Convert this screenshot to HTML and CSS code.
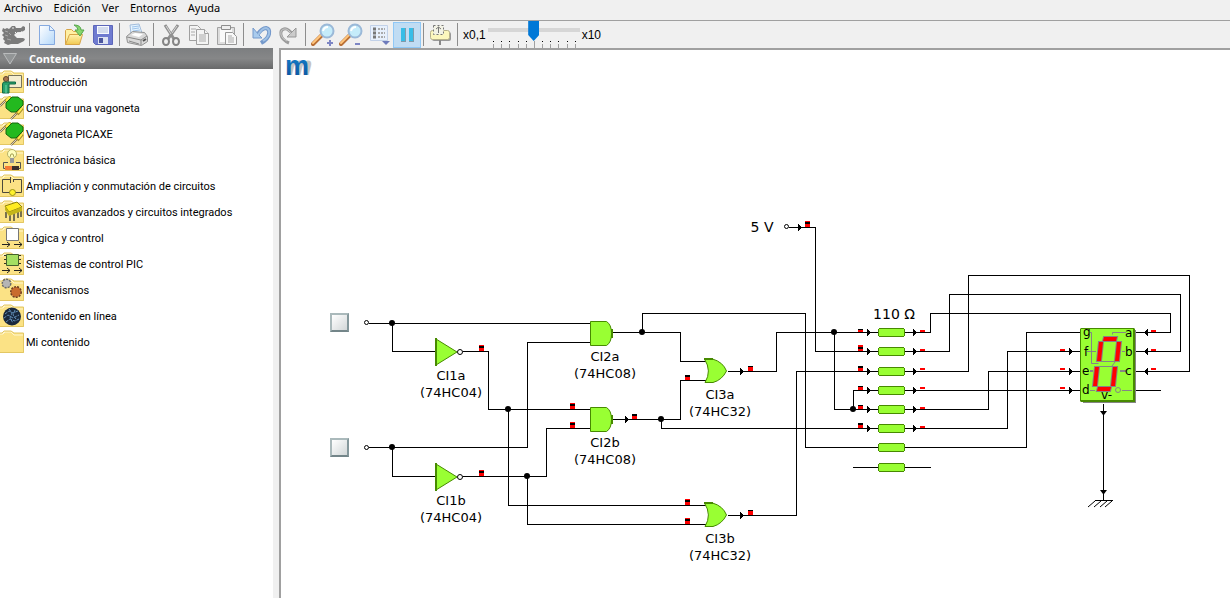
FILE: index.html
```html
<!DOCTYPE html>
<html lang="es">
<head>
<meta charset="utf-8">
<title>Circuito lógico</title>
<link rel="stylesheet" href="styles.css">
</head>
<body>
<svg class="defs" aria-hidden="true">
  <defs>
    <linearGradient id="blueglass" x1="0" y1="0" x2="1" y2="1"><stop offset="0" stop-color="#fff"/><stop offset="1" stop-color="#b4d8fa"/></linearGradient>
    <linearGradient id="gold" x1="0" y1="0" x2="0" y2="1"><stop offset="0" stop-color="#fff3b0"/><stop offset="1" stop-color="#f0c850"/></linearGradient>
    <linearGradient id="logo" x1="0" y1="0" x2="0" y2="1"><stop offset="0" stop-color="#1686d0"/><stop offset="1" stop-color="#0a4f9c"/></linearGradient>
    <symbol id="folder" viewBox="0 0 24 24">
      <path d="M0 3h3l2-2h6l3 2h10v20H0z" fill="#fbe285"/>
      <path d="M0 4h3l2-2h6l3 3h9" fill="none" stroke="#fff6cf"/>
      <path d="M0 3h2l2-2h7l3 2h9.500v19.500H0" fill="none" stroke="#e3c763"/>
    </symbol>
    <symbol id="board" viewBox="0 0 24 24">
      <path d="M0 10L7 3M11 23L22 12" stroke="#7b6d4b" stroke-width="2"/><path d="M0 10L7 3M11 23L22 12" stroke="#d9cfb8"/>
      <path d="M6 6l5-5M17 18l5-6" stroke="#a58b28" stroke-width="4"/><path d="M6 5l4-4M18 17l4-5" stroke="#fff04a" stroke-width="2"/>
      <path d="M6 7l6-6h6l5 4v4l-7 7h-5l-5-4z" fill="#23b91f" stroke="#14680f"/>
    </symbol>
    <symbol id="lens" viewBox="0 0 24 24">
      <path d="M2 21L11 12" stroke="#b96f35" stroke-width="4" stroke-linecap="round"/><path d="M2 20L10 12" stroke="#ffc67d" stroke-width="2" stroke-linecap="round"/>
      <circle cx="16" cy="8" r="6.500" fill="#c5ecfa" stroke="#9bb9d8" stroke-width="2"/><path d="M12 8q1-4 5-4" fill="none" stroke="#fff" stroke-width="2"/>
    </symbol>
    <symbol id="resistor" viewBox="0 0 27 9"><path d="M1 0h25v1h1v7h-1v1H1V8H0V1h1z" fill="#478a00"/><path d="M1 1h25v7H1z" fill="#99ff33"/></symbol>
    <symbol id="inverter" viewBox="0 0 30 30"><path d="M2 2L23 15 2 28z" fill="#99ff33" stroke="#478a00"/><path d="M2 1v28" stroke="#478a00" stroke-width="2"/><circle cx="26" cy="15" r="2.500" fill="#fff" stroke="#000"/></symbol>
    <symbol id="and" viewBox="0 0 24 26"><path d="M.5.5h16q5 3 5 12T16.500 24.500H.5z" fill="#99ff33" stroke="#478a00"/><path d="M22 8v9" stroke="#478a00" stroke-width="2"/></symbol>
    <symbol id="or" viewBox="0 0 24 26"><path d="M.5 1h8Q19 4 22.500 13 18 22 9 24.500H1Q8 13 .5 1z" fill="#99ff33" stroke="#478a00"/><path d="M0 1h9" stroke="#478a00" stroke-width="2"/></symbol>
    <symbol id="arrow" viewBox="0 0 4 7"><path d="M0 0h1v1h1v1h1v1h1v1H3v1H2v1H1v1H0z"/></symbol>
    <symbol id="back" viewBox="0 0 4 7"><path d="M4 0H3v1H2v1H1v1H0v1h1v1h1v1h1v1h1z"/></symbol>
  </defs>
</svg>

<nav class="menu" aria-label="Menú">
  <a href="#archivo">Archivo</a><a href="#edicion">Edición</a><a href="#ver">Ver</a><a href="#entornos">Entornos</a><a href="#ayuda">Ayuda</a>
</nav>

<div class="toolbar" role="toolbar">
  <button class="tool tool-first" aria-label="Crocodile"><svg viewBox="0 0 24 24"><path d="M1 5l2 1 2-1 2 1 3-3h3l1 2 5 0 2-2 2 1v3l-3 2-6 1-2 2 3 3 6 0 2 1-1 2-6 3H9l-3 1-4-2 1-2-2-2 1-2-2-2 2-2-2-2z" fill="#7b7b7b"/><path d="M13 9l2 2 1-2 1 2 1-2 1 2 1-3M13 13l1-1 2 2 1-2 1 2 1-2 1 3" fill="none" stroke="#f4f4f4"/><path d="M3 8l3 1M3 12l3 1M5 16l4 1M7 10l2 2" stroke="#a9a9a9"/><path d="M10 5h2" stroke="#eee"/></svg></button>
  <i class="sep"></i>
  <button class="tool" aria-label="Nuevo"><svg viewBox="0 0 24 24"><path d="M4.500 2.500h10l5 5v14h-15z" fill="url(#blueglass)" stroke="#86aae0"/><path d="M14.500 2.500v5h5z" fill="#e7f4ff" stroke="#86aae0"/></svg></button>
  <button class="tool" aria-label="Abrir"><svg viewBox="0 0 24 24"><path d="M2.500 21.500v-14l1-1h5l2 2h8v3" fill="#fff0a3" stroke="#d7a548"/><path d="M2.500 21.500l4-10h13l-3 10z" fill="url(#gold)" stroke="#d7a548"/><path d="M11 2q7 0 7 5h3l-4 6-5-6h3q0-3-4-5z" fill="#86d66c" stroke="#56a74d"/></svg></button>
  <button class="tool" aria-label="Guardar"><svg viewBox="0 0 24 24"><path d="M2.500 2.500h19v19h-17l-2-2z" fill="#6f7bd0" stroke="#5c66ba"/><path d="M6 3h12v8H6z" fill="#f8faff"/><path d="M7 5h10M7 7h10M7 9h10" stroke="#aebddb"/><path d="M7 14h10v7H7z" fill="#dde3f2"/><path d="M8 15h4v5H8z" fill="#4c569d"/></svg></button>
  <i class="sep"></i>
  <button class="tool" aria-label="Imprimir"><svg viewBox="0 0 24 24"><path d="M6 11L5 2l9-1 3 9z" fill="#e5f4ff" stroke="#a4bddb"/><path d="M7 4l7-1M7 6l7-1M8 8l7-1" stroke="#9ec3eb"/><path d="M1.500 13.500l6-5 12 1 3 4v5l-6 4-14-3z" fill="#d9d9d9" stroke="#919191"/><path d="M2 14l14 3 6-4M16 17v5M4 18l10 3" fill="none" stroke="#888"/><path d="M6 12l8 2 4-3-8-1z" fill="#fff"/><path d="M18 18l3-2" stroke="#555" stroke-width="2"/></svg></button>
  <i class="sep"></i>
  <button class="tool" aria-label="Cortar"><svg viewBox="0 0 24 24"><path d="M6 2l9 14M19 2L9 16" stroke="#909090" stroke-width="3"/><path d="M7 3l5 8M18 3l-5 7" stroke="#d7d7d7"/><g fill="none" stroke="#858585" stroke-width="2"><ellipse cx="7" cy="18.500" rx="3" ry="3.500"/><ellipse cx="17" cy="18.500" rx="3" ry="3.500"/></g></svg></button>
  <button class="tool" aria-label="Copiar"><svg viewBox="0 0 24 24"><g fill="#f4f4f4" stroke="#a0a0a0"><path d="M2.500 2.500h8l3 3v12h-11z"/><path d="M9.500 6.500h8l4 4v11h-12z"/><path d="M17.500 6.500v4h4"/></g><path d="M4 6h5M4 9h4M4 12h4M12 12h7M12 14h7M12 16h7M12 18h7" stroke="#aaa"/></svg></button>
  <button class="tool" aria-label="Pegar"><svg viewBox="0 0 24 24"><path d="M2.500 4.500h17v17h-17z" fill="#ddd" stroke="#a3a3a3"/><path d="M5 6h12v13H5z" fill="#f9f9f9"/><path d="M6.500 2.500h9v4h-9z" fill="#eee" stroke="#8d8d8d"/><path d="M10.500 9.500h7l4 4v8h-11z" fill="#f8f8f8" stroke="#969696"/><path d="M13 13h4M13 15h6M13 17h6M13 19h6" stroke="#aaa"/></svg></button>
  <i class="sep"></i>
  <button class="tool" aria-label="Deshacer"><svg viewBox="0 0 24 24"><path d="M8 12Q13 5 17 5q4 1 3 6-1 5-8 9" fill="none" stroke="#7599cb" stroke-width="4"/><path d="M4 5v10h9l-3-3z" fill="#a9cbed" stroke="#7599cb"/><path d="M9 12Q13 5 17 5q4 1 3 6-1 4-6 7" fill="none" stroke="#9fc1e5" stroke-width="2"/></svg></button>
  <button class="tool" aria-label="Rehacer"><svg viewBox="0 0 24 24"><path d="M16 12Q11 5 7 6q-4 1-3 6 1 5 8 8" fill="none" stroke="#9c9c9c" stroke-width="3"/><path d="M19 5v9h-9l3-3z" fill="#ccc" stroke="#979797"/><path d="M15 12Q11 5 7 6q-4 1-3 6 1 4 6 6" fill="none" stroke="#c8c8c8"/></svg></button>
  <i class="sep"></i>
  <button class="tool" aria-label="Acercar"><svg viewBox="0 0 24 24"><use href="#lens"/><path d="M19 17v6M16 20h6" stroke="#7d86c4" stroke-width="2"/></svg></button>
  <button class="tool" aria-label="Alejar"><svg viewBox="0 0 24 24"><use href="#lens"/><path d="M16 21h5" stroke="#7d86c4" stroke-width="2"/></svg></button>
  <button class="tool" aria-label="Vista"><svg viewBox="0 0 24 24"><path d="M3.500 2.500h17v15h-17z" fill="#e7f0fc" stroke="#c2d1e8"/><path d="M6 6h3M6 10h3M6 14h3" stroke="#777" stroke-width="3"/><path d="M11 6h7M11 10h7M11 14h7" stroke="#aaa" stroke-width="2" stroke-dasharray="2 1"/><path d="M15 18h8l-4 4z" fill="#6e7bbb"/></svg></button>
  <button class="tool tool-on" aria-label="Pausa" aria-pressed="true"><svg viewBox="0 0 24 24"><path d="M6 5h5v14H6zM14 5h5v14h-5z" fill="#37bde7"/><path d="M6 18h4V5h1v14H6zM14 18h4V5h1v14h-5z" fill="#819aaa"/></svg></button>
  <i class="sep"></i>
  <button class="tool" aria-label="Etiqueta"><svg viewBox="0 0 24 24"><rect x="3" y="9" width="19" height="9" rx="2" fill="#999"/><rect x="1.500" y="7.500" width="19" height="9" rx="2" fill="#fcf7bd" stroke="#b6b18b"/><path d="M4.500 2.500h10v9h-10z" fill="#f2f2e5" stroke="#777" stroke-dasharray="2 2"/><path d="M9.500 10V4M7 6l2.500-2L12 6" fill="none" stroke="#777"/><path d="M11 17v5" stroke="#888" stroke-width="2"/></svg></button>
  <i class="sep"></i>
  <label class="speed" for="speed">x0,1</label>
  <span class="slider">
    <input type="range" id="speed" min="-5" max="5" value="0">
    <svg class="ticks" viewBox="0 0 92 7"><path d="M5 .5h1M13 .5h1M21 .5h1M30 .5h1M38 .5h1M54 .5h1M62 .5h1M70 .5h1M79 .5h1M87 .5h1" stroke="#000"/><path d="M5.500 3v4M13.500 3v4M21.500 3v4M30.500 3v4M38.500 3v4M46.500 0v7M54.500 3v4M62.500 3v4M70.500 3v4M79.500 3v4M87.500 3v4" stroke="#a0a0a0"/></svg>
  </span>
  <span class="speed">x10</span>
</div>

<div class="workspace">
  <aside class="sidebar">
    <h2 class="heading"><svg viewBox="0 0 14 12"><path d="M.5.5h13L7 11z" fill="#929596" stroke="#b9bbbc"/></svg>Contenido</h2>
    <nav class="topics" aria-label="Contenido">
      <a href="#1"><svg viewBox="0 0 24 24"><use href="#folder"/><path d="M8.500 5.500h13v12h-13z" fill="#f4edcf" stroke="#77745d"/><circle cx="6" cy="9" r="2.500" fill="#a9744e" stroke="#60452f"/><path d="M2.500 23v-9l1-2h12v2H9v9z" fill="#28a16a" stroke="#146a46"/><path d="M6 15v8" stroke="#71d9aa"/></svg>Introducción</a>
      <a href="#2"><svg viewBox="0 0 24 24"><use href="#folder"/><use href="#board"/></svg>Construir una vagoneta</a>
      <a href="#3"><svg viewBox="0 0 24 24"><use href="#folder"/><use href="#board"/></svg>Vagoneta PICAXE</a>
      <a href="#4"><svg viewBox="0 0 24 24"><use href="#folder"/><path d="M8 14.500H3.500v6H20.500v-6H16" fill="none" stroke="#555"/><circle cx="12" cy="6" r="4.500" fill="#ffffbd" stroke="#b6b268"/><path d="M10 10h4v5h-4z" fill="#999"/><path d="M10 9l1-3 2 0 1 3" fill="none" stroke="#a8a358"/><path d="M5 18h7v4H5z" fill="#f47b38"/><path d="M12 18h7v4h-7z" fill="#3b302d"/></svg>Electrónica básica</a>
      <a href="#5"><svg viewBox="0 0 24 24"><use href="#folder"/><path d="M10 5.500H2.500v13H21.500v-13H14M10.500 3v6M13.500 5v3" fill="none" stroke="#4c493c"/><circle cx="12.500" cy="18.500" r="3" fill="#fff22d" stroke="#9c9415"/></svg>Ampliación y conmutación de circuitos</a>
      <a href="#6"><svg viewBox="0 0 24 24"><use href="#folder"/><path d="M6 12v6M10 13v8M14 13v8M18 10v8M21 8v9" stroke="#77704f" stroke-width="2"/><path d="M5 6L17 2l5 5-13 5z" fill="#ffeb22" stroke="#8d820d"/><path d="M9 12l13-5v4L9 16 5 10V6z" fill="#c4b519"/></svg>Circuitos avanzados y circuitos integrados</a>
      <a href="#7"><svg viewBox="0 0 24 24"><use href="#folder"/><path d="M6.500 2.500h12v12h-12z" fill="#fff" stroke="#777"/><path d="M2 18.500h8M7 16l3 2.500L7 21M14 18.500h8M19 16l3 2.500-3 2.500" fill="none" stroke="#222"/></svg>Lógica y control</a>
      <a href="#8"><svg viewBox="0 0 24 24"><use href="#folder"/><path d="M4 3.500h17M4 7.500h17M4 11.500h17" stroke="#353525"/><path d="M6.500 2.500h12v11h-12z" fill="#a5df62" stroke="#45612c"/><path d="M2 18.500h8M7 16l3 2.500L7 21M14 18.500h8M19 16l3 2.500-3 2.500" fill="none" stroke="#222"/></svg>Sistemas de control PIC</a>
      <a href="#9"><svg viewBox="0 0 24 24"><use href="#folder"/><circle cx="6.500" cy="5.500" r="4" fill="#aaa" stroke="#696969" stroke-width="2" stroke-dasharray="2 1"/><circle cx="6.500" cy="5.500" r="3.500" fill="#b5b5b5"/><circle cx="16" cy="14" r="5" fill="#b65d28" stroke="#704024" stroke-width="2" stroke-dasharray="2 1"/><circle cx="16" cy="14" r="4.500" fill="#c86b2e"/></svg>Mecanismos</a>
      <a href="#10"><svg viewBox="0 0 24 24"><use href="#folder"/><circle cx="12" cy="12.500" r="9" fill="#19283d"/><path d="M5 10l4-3 4 2 5-2M4 14l4-3 5 3 6-3M6 18l4-3 5 2 4-2M9 5l3 4-2 5 3 5M15 6l-2 5 3 4" fill="none" stroke="#618cb5" stroke-dasharray="3 1"/></svg>Contenido en línea</a>
      <a href="#11"><svg viewBox="0 0 24 24"><use href="#folder"/></svg>Mi contenido</a>
    </nav>
  </aside>
  <main class="canvas">
    <svg class="circuit" width="949" height="548" viewBox="281 50 949 548" role="img" aria-label="Circuito con display de siete segmentos">
      <text class="mark mark-shade" x="286" y="75" transform="translate(19 0) skewX(-14)">m</text>
      <text class="mark" x="285" y="75">m</text>

      <g class="wires" transform="translate(.5 .5)">
        <path d="M368 323H590M392 323V351H435M462 351H488V409H590M508 409V505H706"/>
        <path d="M368 447H527V342H590M392 447V476H435M462 476H546V428H590M527 476V524H706"/>
        <path d="M612 332H680V361H706M642 332V313H805V447H878M904 447H1026V332H1080"/>
        <path d="M612 419H680V380H706M661 419V428H878M904 428H1007V351H1080"/>
        <path d="M727 371H776V332H878M834 332V409H878M853 409V390H878"/>
        <path d="M727 515H796V371H878M788 227H815V351H878"/>
        <path d="M904 332H930V313H1170V332H1135M904 351H949V294H1180V351H1135M904 371H968V275H1189V371H1135"/>
        <path d="M904 390H1080M904 409H988V371H1080M852 467H930M1135 390H1160M1103 403V500M1094 500H1112"/>
      </g>
      <path d="M1095 501l-7 6M1101 501l-7 6M1107 501l-7 6M1112 501l-7 6" stroke="#000"/>
      <path d="M1100 411h7l-3 4h-1zM1100 490h7l-3 4h-1z"/>

      <g fill="#fff" stroke="#000"><circle cx="366.500" cy="322.500" r="2"/><circle cx="366.500" cy="447.500" r="2"/><circle cx="786.500" cy="226.500" r="2"/></g>
      <g><circle cx="392" cy="323" r="3"/><circle cx="392" cy="447" r="3"/><circle cx="508" cy="409" r="3"/><circle cx="527" cy="476" r="3"/><circle cx="642" cy="332" r="3"/><circle cx="661" cy="419" r="3"/><circle cx="834" cy="332" r="3"/><circle cx="853" cy="409" r="3"/></g>

      <g class="crisp">
        <use href="#arrow" x="798" y="224" width="4" height="7"/><use href="#arrow" x="625" y="416" width="4" height="7"/><use href="#arrow" x="740" y="368" width="4" height="7"/><use href="#arrow" x="740" y="512" width="4" height="7"/>
        <use href="#arrow" x="867" y="329" width="4" height="7"/><use href="#arrow" x="867" y="348" width="4" height="7"/><use href="#arrow" x="867" y="368" width="4" height="7"/><use href="#arrow" x="867" y="387" width="4" height="7"/><use href="#arrow" x="867" y="406" width="4" height="7"/><use href="#arrow" x="867" y="425" width="4" height="7"/>
        <use href="#arrow" x="913" y="329" width="4" height="7"/><use href="#arrow" x="913" y="348" width="4" height="7"/><use href="#arrow" x="913" y="368" width="4" height="7"/><use href="#arrow" x="913" y="387" width="4" height="7"/><use href="#arrow" x="913" y="406" width="4" height="7"/><use href="#arrow" x="913" y="425" width="4" height="7"/>
        <use href="#arrow" x="1069" y="348" width="4" height="7"/><use href="#arrow" x="1069" y="368" width="4" height="7"/><use href="#arrow" x="1069" y="387" width="4" height="7"/>
        <use href="#back" x="1144" y="329" width="4" height="7"/><use href="#back" x="1144" y="348" width="4" height="7"/><use href="#back" x="1144" y="368" width="4" height="7"/>
        <use href="#resistor" x="878" y="328" width="27" height="9"/><use href="#resistor" x="878" y="347" width="27" height="9"/><use href="#resistor" x="878" y="367" width="27" height="9"/><use href="#resistor" x="878" y="386" width="27" height="9"/><use href="#resistor" x="878" y="405" width="27" height="9"/><use href="#resistor" x="878" y="424" width="27" height="9"/><use href="#resistor" x="878" y="443" width="27" height="9"/><use href="#resistor" x="878" y="463" width="27" height="9"/>
        <path class="red" d="M479 345h5v6h-5zM479 470h5v6h-5zM570 403h5v6h-5zM570 422h5v6h-5zM632 416h5v3h-5zM685 377h5v3h-5zM748 367h5v4h-5zM685 499h5v6h-5zM685 518h5v6h-5zM748 511h5v4h-5zM805 221h5v6h-5z"/>
        <path class="red" d="M858 330h5v2h-5zM858 345h5v6h-5zM858 368h5v3h-5zM858 387h5v3h-5zM858 406h5v3h-5zM858 425h5v3h-5zM920 330h5v2h-5zM920 349h5v2h-5zM920 368h5v2h-5zM920 387h5v2h-5zM920 407h5v2h-5zM920 426h5v2h-5z"/>
        <path class="red" d="M1060 349h5v2h-5zM1060 368h5v2h-5zM1060 387h5v2h-5zM1151 330h5v2h-5zM1151 349h5v2h-5zM1151 368h5v2h-5z"/>
        <path d="M479 346h5v2h-5zM479 471h5v2h-5zM570 404h5v2h-5zM570 423h5v2h-5zM632 414h5v2h-5zM685 375h5v2h-5zM748 366h5v1h-5zM685 500h5v2h-5zM685 519h5v2h-5zM748 510h5v1h-5zM805 222h5v2h-5zM858 329h5v1h-5zM858 347h5v2h-5zM858 366h5v2h-5zM858 386h5v1h-5zM858 405h5v1h-5zM858 423h5v2h-5z"/>
      </g>

      <use href="#inverter" x="434" y="337" width="30" height="30"/><use href="#inverter" x="434" y="462" width="30" height="30"/>
      <use href="#and" x="590" y="321" width="24" height="26"/><use href="#and" x="590" y="407" width="24" height="26"/>
      <use href="#or" x="704" y="358" width="24" height="26"/><use href="#or" x="704" y="502" width="24" height="26"/>

      <g>
        <path d="M1083 330h53v73h-53z" fill="#858585"/><path d="M1081 328h53l1 1v73h-54l-1-1v-72z" fill="#478a00"/><path d="M1081 329h52v71h-52z" fill="#99ff33"/>
        <path d="M1090 332.500h1.500v31h7M1126 332.500h-13.500v2M1087 351.500h9M1122 351.500h3M1090 390.500h5M1122 390.500h10" fill="none" stroke="#858585"/>
        <path d="M1090 371h3M1120 371h6" stroke="#858585" stroke-width="2"/><circle cx="1118" cy="390" r="2.500" fill="none" stroke="#858585"/>
        <g class="segments">
          <path d="M1104 337h13l-1 4h-13z"/><path d="M1099 342h4l-2 19h-4z"/><path d="M1117 342h4l-2 19h-4z"/><path d="M1095 367h4l-2 19h-4z"/><path d="M1113 367h4l-2 19h-4z"/><path d="M1098 387h13l-1 4h-13z"/>
        </g>
        <path d="M1101 361.500h13M1099 366.500h13M1115 362l-3 4" fill="none" stroke="#858585"/>
        <g class="pins"><text x="1083" y="336">g</text><text x="1084" y="356">f</text><text x="1082" y="375">e</text><text x="1082" y="394">d</text><text x="1125" y="337">a</text><text x="1125" y="356">b</text><text x="1125" y="375">c</text><text x="1101" y="399">v-</text></g>
      </g>

      <g class="names">
        <text x="451" y="380">CI1a</text><text x="451" y="397">(74HC04)</text>
        <text x="451" y="505">CI1b</text><text x="451" y="522">(74HC04)</text>
        <text x="605" y="361">CI2a</text><text x="605" y="378">(74HC08)</text>
        <text x="605" y="447">CI2b</text><text x="605" y="464">(74HC08)</text>
        <text x="720" y="399">CI3a</text><text x="720" y="416">(74HC32)</text>
        <text x="720" y="543">CI3b</text><text x="720" y="560">(74HC32)</text>
        <g class="values"><text x="762" y="232">5 V</text><text x="894" y="319">110 Ω</text></g>
      </g>
    </svg>
    <button class="switch switch-a" aria-label="Entrada A"></button>
    <button class="switch switch-b" aria-label="Entrada B"></button>
  </main>
</div>
</body>
</html>
```
FILE: styles.css
```css
* { box-sizing: border-box; }
body {
  margin: 0;
  min-height: 100vh;
  display: flex;
  flex-direction: column;
  background: #f0f0f0;
  color: #000;
  font-family: "Open Sans", "Noto Sans", sans-serif;
  font-size: 12px;
}
a { color: inherit; text-decoration: none; }
.defs { position: absolute; width: 0; height: 0; }

.menu {
  display: flex;
  gap: 11px;
  height: 20px;
  padding: 0 4px;
  line-height: 16px;
  font-family: "Noto Sans", sans-serif;
  font-size: 11px;
}
.toolbar {
  display: flex;
  align-items: center;
  height: 28px;
  border-top: 1px solid #a0a0a0;
}
.tool {
  flex: none;
  display: flex;
  align-items: center;
  justify-content: center;
  width: 28px;
  height: 26px;
  padding: 0;
  border: 1px solid transparent;
  background: none;
}
.tool svg { width: 24px; height: 24px; flex: none; }
.tool-first { width: 27px; }
.tool-on { background: #c0dcf3; border-color: #90c8f6; }
.sep { flex: none; width: 6px; height: 23px; background: linear-gradient(#8d8d8d, #8d8d8d) 2px 0 / 1px 100% no-repeat; }
.speed { padding: 0 2px; font-family: "Liberation Sans", sans-serif; font-size: 12px; }
.slider { display: flex; flex-direction: column; align-self: stretch; width: 92px; }
.slider input {
  appearance: none;
  width: 100%;
  height: 20px;
  margin: 0;
  background: linear-gradient(#d6d6d6, #d6d6d6) 0 7px / 100% 4px no-repeat;
}
.slider input::-webkit-slider-thumb {
  appearance: none;
  width: 11px;
  height: 20px;
  background: #0078d7;
  clip-path: polygon(0 0, 100% 0, 100% 70%, 50% 100%, 0 70%);
}
.ticks { width: 92px; height: 7px; }

.workspace { flex: 1; display: flex; gap: 6px; }
.sidebar { flex: none; width: 273px; background: #fff; }
.heading {
  display: flex;
  align-items: center;
  gap: 12px;
  height: 21px;
  margin: 0;
  padding-left: 3px;
  background: linear-gradient(#7c7e80, #868788 50%, #68696a);
  color: #fff;
  font-size: 11px;
  font-weight: 700;
}
.heading svg { width: 14px; height: 12px; }
.topics a {
  display: flex;
  align-items: center;
  gap: 2px;
  height: 26px;
  font-family: Roboto, "Liberation Sans", sans-serif;
  font-size: 11px;
  white-space: nowrap;
}
.topics svg { flex: none; width: 24px; height: 24px; }

.canvas {
  position: relative;
  flex: 1;
  min-width: 0;
  overflow: hidden;
  background: #fff;
  border-top: 2px solid #a0a0a0;
  border-left: 2px solid #a0a0a0;
}
.circuit { display: block; }
.wires { fill: none; stroke: #000; stroke-width: 1; shape-rendering: crispEdges; }
.crisp { shape-rendering: crispEdges; }
.red { fill: #f00; }
.segments { fill: #f00; stroke: #858585; stroke-width: 2; paint-order: stroke; }
.pins { font-family: "DejaVu Sans", sans-serif; font-size: 12px; }
.names { font-family: "DejaVu Sans", Verdana, sans-serif; font-size: 13px; text-anchor: middle; }
.values { font-size: 14px; }
.mark { font-family: "Liberation Sans", sans-serif; font-size: 27px; font-weight: 700; fill: url(#logo); }
.mark-shade { fill: #c4c4c4; }
.switch {
  position: absolute;
  left: 49px;
  width: 19px;
  height: 19px;
  padding: 0;
  border: 2px solid #aab9bb;
  border-right-color: #84979b;
  border-bottom-color: #738589;
  background: linear-gradient(135deg, #fff, #d2d7d8);
}
.switch-a { top: 263px; }
.switch-b { top: 388px; }
```
